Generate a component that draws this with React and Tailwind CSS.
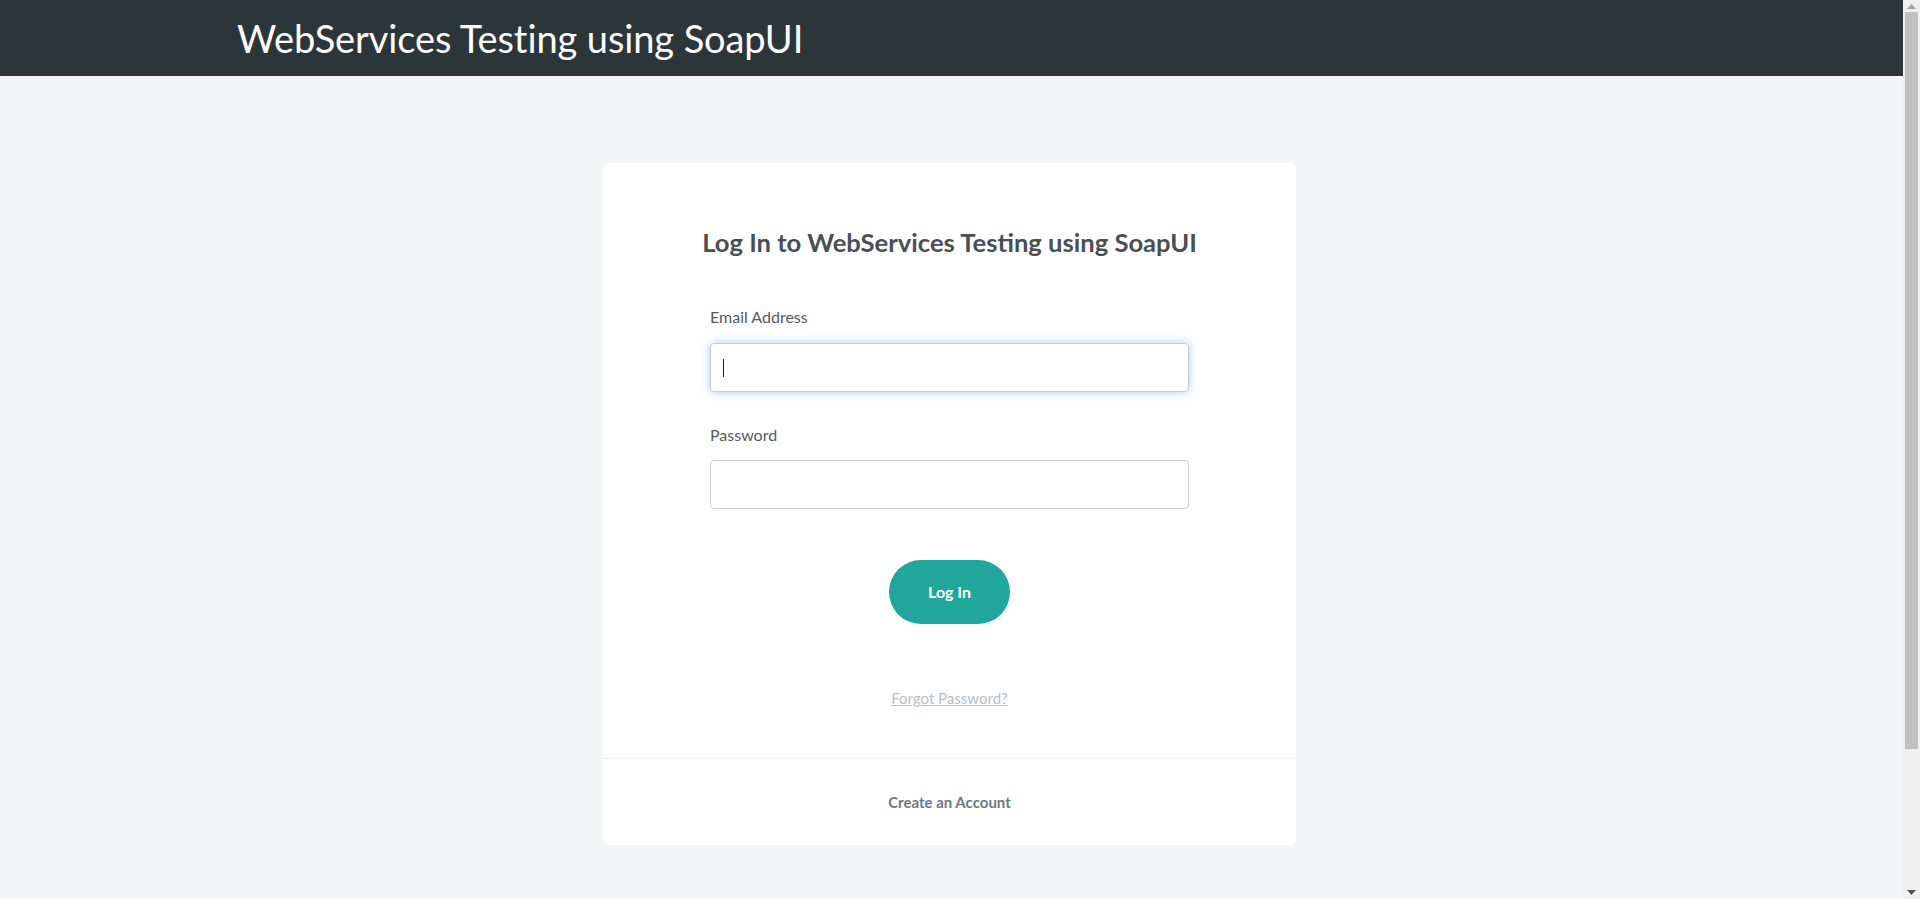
import React from "react";

function Scrollbar() {
  return (
    <div className="w-[17px] shrink-0 h-[899px] bg-[#f0f0f0] flex flex-col items-center">
      <div className="h-[12px] w-full flex items-center justify-center">
        <svg width="9" height="5" viewBox="0 0 9 5"><path d="M4.5 0 L9 5 L0 5 Z" fill="#a3a3a3" /></svg>
      </div>
      <div className="w-[17px] px-[2px] h-[737px]">
        <div className="w-full h-full bg-[#c1c1c1]"></div>
      </div>
      <div className="flex-1"></div>
      <div className="h-[14px] w-full flex items-center justify-center">
        <svg width="9" height="5" viewBox="0 0 9 5"><path d="M0 0 L9 0 L4.5 5 Z" fill="#505050" /></svg>
      </div>
    </div>
  );
}

export default function App() {
  return (
    <div className="h-[899px] overflow-hidden flex bg-[#f4f5f7]" style={{ fontFamily: "Lato, 'Open Sans', sans-serif" }}>
      <div className="flex-1 min-w-0">
        <header className="h-[76px] bg-[#2b3638] flex items-center">
          <div className="pl-[237px] text-white text-[38px] leading-none font-normal tracking-[-0.1px]">
            WebServices Testing using SoapUI
          </div>
        </header>
        <main className="flex justify-center pt-[87px] pr-[4px]">
          <div className="w-[693px] bg-white rounded-[6px] overflow-hidden">
            <div className="px-[107px] pt-[64px] pb-[50px] flex flex-col">
              <h1 className="-mx-[80px] whitespace-nowrap text-center text-[25.6px] leading-[30px] font-bold text-[#4a4f55]">
                Log In to WebServices Testing using SoapUI
              </h1>
              <label className="mt-[50px] text-[16px] leading-[20px] text-[#555a60]">Email Address</label>
              <div className="mt-[16px] h-[49px] rounded-[4px] border border-[#c8ccd1] shadow-[0_0_8px_rgba(90,150,230,0.5)] flex items-center px-[12px]">
                <div className="w-px h-[18px] bg-[#222]"></div>
              </div>
              <label className="mt-[33px] text-[16px] leading-[20px] text-[#555a60]">Password</label>
              <div className="mt-[15px] h-[49px] rounded-[4px] border border-[#cfcfcf]"></div>
              <div className="mt-[51px] flex justify-center">
                <button className="w-[121px] h-[64px] rounded-full bg-[#20a69a] text-white text-[16px] font-bold">
                  Log In
                </button>
              </div>
              <div className="mt-[64px] text-center text-[15px] leading-[20px]">
                <a className="text-[#b7bdcc] underline">Forgot Password?</a>
              </div>
            </div>
            <div className="border-t border-[#ebecee] py-[33px] text-center text-[15px] leading-[20px] font-bold text-[#6f7787]">
              Create an Account
            </div>
          </div>
        </main>
      </div>
      <Scrollbar />
    </div>
  );
}
